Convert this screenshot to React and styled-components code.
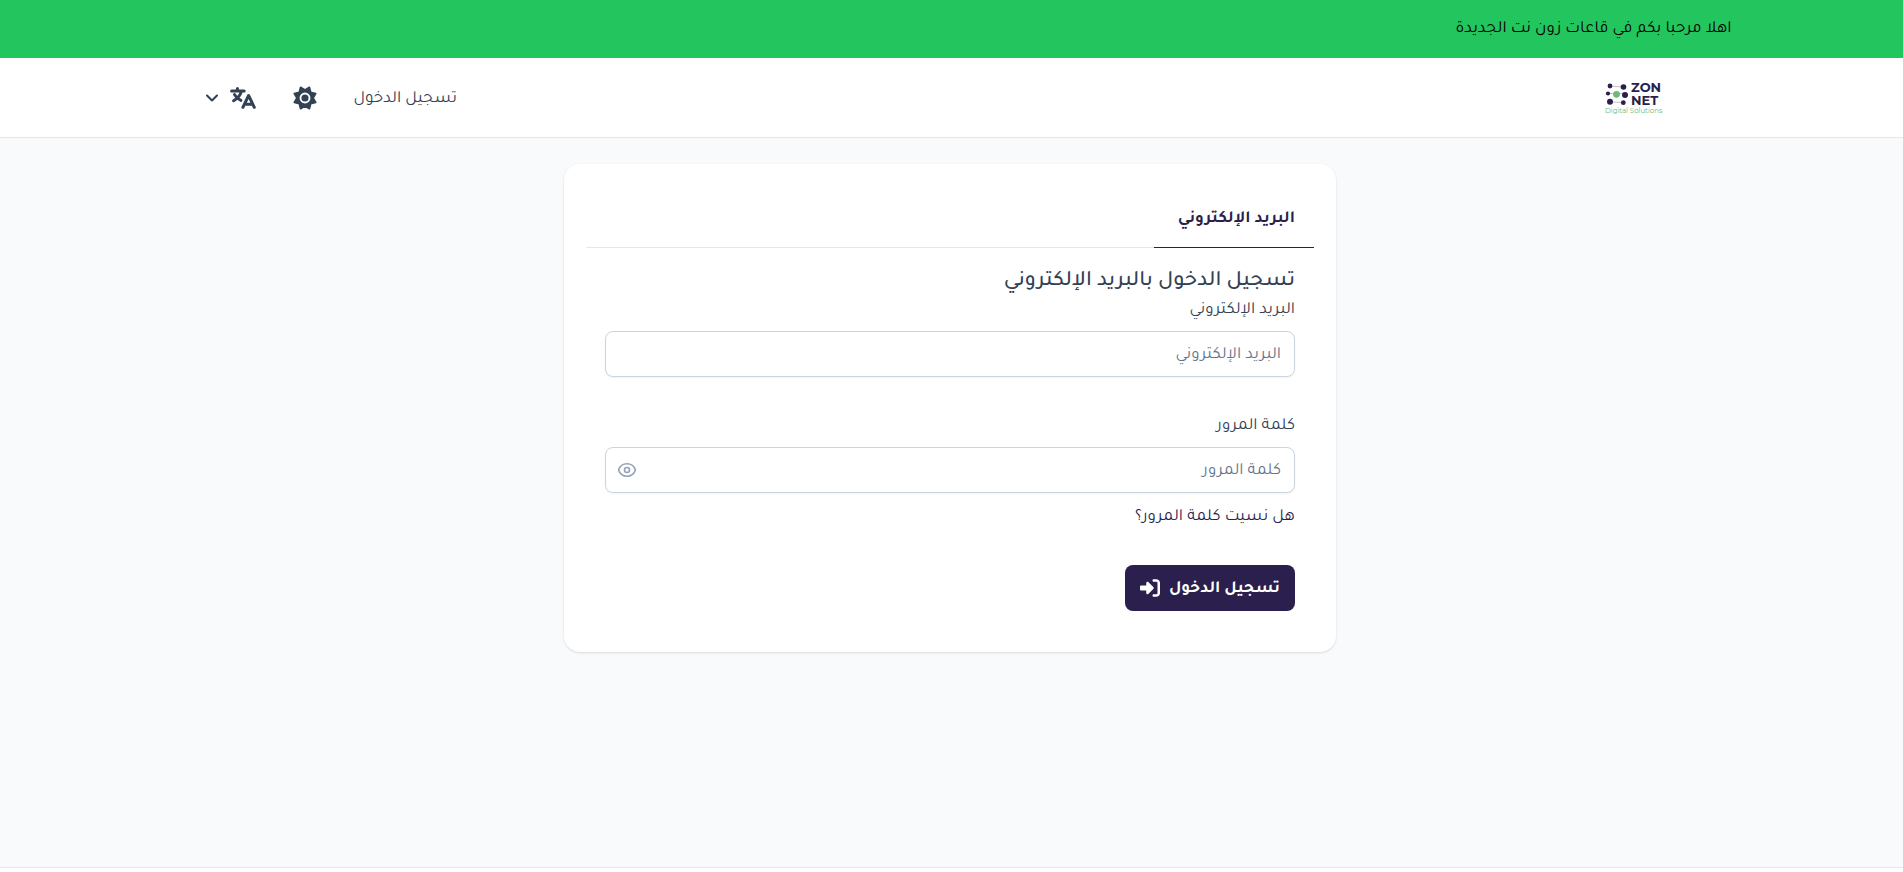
import React from 'react';
import styled, { createGlobalStyle } from 'styled-components';
import { FaRightToBracket } from 'react-icons/fa6';
import { HiOutlineEye } from 'react-icons/hi2';
import { ChevronDown } from 'lucide-react';

function Logo() {
  return (
    <svg width="60" height="36" viewBox="0 0 60 36" role="img" aria-label="Zon Net">
      <path d="M6 6 19 7M4 13.5h17M6 21.7l13 1" stroke="#9a96a8" strokeWidth="0.6" />
      <g fill="#2a1f4d">
        <circle cx="6" cy="6" r="2.4" />
        <circle cx="19.5" cy="7" r="2.8" />
        <circle cx="4" cy="13.5" r="2.1" />
        <circle cx="21" cy="15" r="3" />
        <circle cx="6" cy="21.7" r="3" />
        <circle cx="19.3" cy="22.7" r="2.4" />
      </g>
      <circle cx="12.5" cy="14.3" r="3.4" fill="#6dba78" />
      <LogoText x="27" y="12">ZON</LogoText>
      <LogoText x="27" y="25">NET</LogoText>
      <LogoTagline x="1" y="33">Digital Solutions</LogoTagline>
    </svg>
  );
}

function SunIcon() {
  return (
    <svg width="24" height="24" viewBox="-12 -12 24 24" aria-hidden="true">
      <path
        d="M4.400 10.700 0 8.100-4.400 10.700-5.700 5.700-10.700 4.400-8.100 0-10.700-4.400-5.700-5.700-4.400-10.700 0-8.100 4.400-10.700 5.700-5.700 10.700-4.400 8.100 0 10.700 4.400 5.700 5.700Z"
        fill="currentColor"
        stroke="currentColor"
        strokeWidth="1.700"
        strokeLinejoin="round"
      />
      <circle r="4.500" fill="none" stroke="#ffffff" strokeWidth="1.900" />
    </svg>
  );
}

function TranslateIcon() {
  return (
    <svg width="26" height="22" viewBox="0 0 26 22" fill="none" stroke="currentColor" strokeWidth="3" strokeLinecap="round" strokeLinejoin="round" aria-hidden="true">
      <path d="M7.4 1.6v2M1.600 3.900h12.600M11.400 4.400C10.200 8.600 7.400 11.600 3.600 13.700M4.500 7.600c1.400 2.600 3.400 4.500 6.400 5.800" />
      <path d="m12.900 20.300 5.700-11.800 5.700 11.800M15 17.200h7.500" />
    </svg>
  );
}

function App() {
  const [showPassword, setShowPassword] = React.useState(false);

  return (
    <>
      <GlobalStyle />
      <Page dir="rtl" lang="ar">
        <Banner>
          <BannerText>اهلا مرحبا بكم في قاعات زون نت الجديدة</BannerText>
        </Banner>

        <Header>
          <Nav>
            <LogoLink href="#"><Logo /></LogoLink>
            <NavActions>
              <NavLink href="#">تسجيل الدخول</NavLink>
              <IconButton type="button" aria-label="المظهر"><SunIcon /></IconButton>
              <IconButton type="button" aria-label="اللغة">
                <TranslateIcon />
                <ChevronDown size={20} strokeWidth={2.5} />
              </IconButton>
            </NavActions>
          </Nav>
        </Header>

        <Main>
          <Card>
            <Tabs role="tablist">
              <Tab type="button" role="tab" aria-selected="true">البريد الإلكتروني</Tab>
            </Tabs>
            <Form onSubmit={(e) => e.preventDefault()}>
              <Title>تسجيل الدخول بالبريد الإلكتروني</Title>
              <Field>
                <Label htmlFor="email">البريد الإلكتروني</Label>
                <InputBox>
                  <Input id="email" type="text" placeholder="البريد الإلكتروني" />
                </InputBox>
              </Field>
              <Field>
                <Label htmlFor="password">كلمة المرور</Label>
                <InputBox>
                  <Input id="password" type={showPassword ? 'text' : 'password'} placeholder="كلمة المرور" />
                  <EyeButton type="button" aria-label="إظهار" onClick={() => setShowPassword(!showPassword)}>
                    <HiOutlineEye size={20} strokeWidth={2} />
                  </EyeButton>
                </InputBox>
              </Field>
              <ForgotLink href="#">هل نسيت كلمة المرور؟</ForgotLink>
              <SubmitButton type="submit">
                <ButtonText>تسجيل الدخول</ButtonText>
                <FaRightToBracket size={20} />
              </SubmitButton>
            </Form>
          </Card>
        </Main>

        <Footer />
      </Page>
    </>
  );
}

const GlobalStyle = createGlobalStyle`
  *, *::before, *::after {
    box-sizing: border-box;
  }

  body {
    margin: 0;
    background: #ffffff;
  }

  body, button, input {
    font-family: Tajawal, 'Noto Sans', 'DejaVu Sans', sans-serif;
    font-size: 17px;
    line-height: 28px;
  }
`;

const Page = styled.div`
  display: flex;
  flex-direction: column;
  min-height: 100vh;
  background: #f8fafc;
  color: #334155;
`;

const Banner = styled.div`
  background: #22c55e;
  color: #000000;
`;

const BannerText = styled.p`
  max-width: 1560px;
  margin: 0 auto;
  padding: 16px 0 14px;
`;

const Header = styled.header`
  background: #ffffff;
  border-bottom: 1px solid #e2e8f0;
`;

const Nav = styled.nav`
  display: flex;
  align-items: center;
  justify-content: space-between;
  max-width: 1536px;
  height: 79px;
  margin: 0 auto;
  padding-inline: 56px 18px;
`;

const NavActions = styled.div`
  display: flex;
  align-items: center;
  gap: 37px;
`;

const LogoLink = styled.a`
  display: flex;
`;

const LogoText = styled.text`
  font-family: Montserrat, Inter, sans-serif;
  font-size: 13px;
  font-weight: 700;
  fill: #2a1f4d;
  direction: ltr;
`;

const LogoTagline = styled.text`
  font-family: Montserrat, Inter, sans-serif;
  font-size: 7px;
  fill: #6dba78;
  direction: ltr;
`;

const NavLink = styled.a`
  padding-top: 4px;
  color: #334155;
  text-decoration: none;
`;

const IconButton = styled.button`
  display: flex;
  align-items: center;
  gap: 8px;
  padding: 0;
  border: none;
  background: none;
  color: #334155;
  cursor: pointer;
`;

const Main = styled.main`
  flex: 1;
  padding: 26px 3px 26px 0;
`;

const Card = styled.section`
  max-width: 772px;
  margin: 0 auto;
  padding: 22px;
  background: #ffffff;
  border-radius: 16px;
  box-shadow: 0 1px 3px 0 rgb(0 0 0 / 0.1), 0 1px 2px -1px rgb(0 0 0 / 0.1);
`;

const Tabs = styled.div`
  display: flex;
  border-bottom: 1px solid #e5e7eb;
`;

const Tab = styled.button`
  min-width: 160px;
  height: 62px;
  margin-bottom: -1px;
  padding: 6px 19px 0;
  border: none;
  border-bottom: 1px solid #2a1f4d;
  background: none;
  color: #2a1f4d;
  font-weight: 700;
  text-align: start;
  cursor: pointer;
`;

const Form = styled.form`
  display: flex;
  flex-direction: column;
  align-items: flex-start;
  padding: 19px;
`;

const Title = styled.h1`
  margin: 0;
  font-size: 22px;
  font-weight: 500;
  line-height: 30px;
`;

const Field = styled.div`
  width: 100%;

  & + & {
    margin-top: 36px;
  }
`;

const Label = styled.label`
  display: block;
  margin-bottom: 6px;
`;

const InputBox = styled.div`
  display: flex;
  align-items: center;
  height: 46px;
  border: 1px solid #cbd5e1;
  border-radius: 8px;
  background: #ffffff;
  box-shadow: 0 1px 2px 0 rgb(0 0 0 / 0.05);
`;

const Input = styled.input`
  flex: 1;
  min-width: 0;
  padding: 4px 13px 0;
  border: none;
  outline: none;
  background: transparent;
  color: #334155;

  &::placeholder {
    color: #64748b;
    opacity: 1;
  }
`;

const EyeButton = styled.button`
  display: flex;
  margin-inline-end: 11px;
  padding: 0;
  border: none;
  background: none;
  color: #94a3b8;
  cursor: pointer;
`;

const ForgotLink = styled.a`
  margin-top: 11px;
  color: #2a1f4d;
  text-decoration: none;
`;

const SubmitButton = styled.button`
  display: flex;
  align-items: center;
  gap: 9px;
  height: 46px;
  margin-top: 33px;
  padding: 0 15px;
  border: none;
  border-radius: 8px;
  background: #2a1f4d;
  color: #ffffff;
  font-weight: 700;
  cursor: pointer;
`;

const ButtonText = styled.span`
  padding-top: 4px;
`;

const Footer = styled.footer`
  min-height: 5px;
  border-top: 1px solid #e2e8f0;
  background: #ffffff;
`;

export default App;
